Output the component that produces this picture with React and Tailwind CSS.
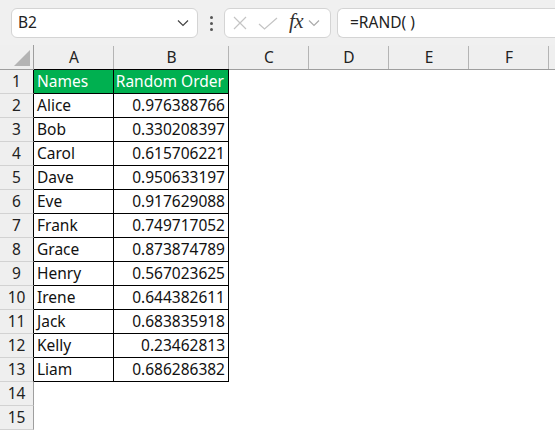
import React from "react";

const rows = [
  ["Alice", "0.976388766"],
  ["Bob", "0.330208397"],
  ["Carol", "0.615706221"],
  ["Dave", "0.950633197"],
  ["Eve", "0.917629088"],
  ["Frank", "0.749717052"],
  ["Grace", "0.873874789"],
  ["Henry", "0.567023625"],
  ["Irene", "0.644382611"],
  ["Jack", "0.683835918"],
  ["Kelly", "0.23462813"],
  ["Liam", "0.686286382"],
];

const cols = ["A", "B", "C", "D", "E", "F"];

const Chevron = ({ className }) => (
  <svg viewBox="0 0 12 8" className={className} fill="none" stroke="currentColor" strokeWidth="1.2">
    <path d="M1 1.5 6 6.5 11 1.5" />
  </svg>
);

const Toolbar = () => (
  <div className="h-[45px] bg-[#f0f0f0] flex items-center pl-[11px] pt-[1px]">
    {/* Name box */}
    <div className="w-[187px] h-[30px] bg-white border border-[#d4d4d4] rounded-[6px] flex items-center justify-between pl-[6px] pr-[8px]">
      <span className="text-[15.5px] text-[#222]">B2</span>
      <Chevron className="w-[12px] h-[8px] text-[#444]" />
    </div>
    <div className="w-[26px] flex flex-col items-center gap-[3px]">
      <span className="w-[3px] h-[3px] bg-[#555] rounded-full" />
      <span className="w-[3px] h-[3px] bg-[#555] rounded-full" />
      <span className="w-[3px] h-[3px] bg-[#555] rounded-full" />
    </div>
    {/* cancel / enter / fx */}
    <div className="w-[107px] h-[30px] bg-white border border-[#d4d4d4] rounded-[6px] flex items-center pl-[8px]">
      <svg viewBox="0 0 14 14" className="w-[14px] h-[14px] text-[#c4c4c4]" fill="none" stroke="currentColor" strokeWidth="1.2">
        <path d="M1 1 13 13M13 1 1 13" />
      </svg>
      <svg viewBox="0 0 20 13" className="w-[20px] h-[13px] ml-[11px] text-[#c4c4c4]" fill="none" stroke="currentColor" strokeWidth="1.2">
        <path d="M1 7 6.5 12 19 1" />
      </svg>
      <span className="ml-[11px] text-[21px] italic text-[#333] leading-none font-['Liberation_Serif',serif] tracking-[-0.5px] -mt-[3px]">fx</span>
      <Chevron className="ml-[5px] w-[12px] h-[8px] text-[#aaa]" />
    </div>
    {/* formula */}
    <div className="ml-[6px] flex-1 h-[30px] bg-white border border-r-0 border-[#d4d4d4] rounded-l-[6px] flex items-center pl-[12px]">
      <span className="text-[15.5px] text-[#222]">=RAND( )</span>
    </div>
  </div>
);

const grid = "grid grid-cols-[34px_80px_115px_80px_80px_80px_80px_1fr]";

export default function App() {
  return (
    <div className="w-[555px] h-[430px] overflow-hidden bg-white font-['Noto_Sans',sans-serif] text-[#111] text-[15.5px]">
      <Toolbar />
      {/* column headers */}
      <div className={`${grid} h-[25px] bg-[#efefef]`}>
        <div className="border-r border-b border-[#9e9e9e] relative">
          <svg viewBox="0 0 16 16" className="absolute right-[3px] bottom-[3px] w-[16px] h-[16px]">
            <path d="M16 0 16 16 0 16Z" fill="#b4b4b4" />
          </svg>
        </div>
        {cols.map((c) => (
          <div
            key={c}
            className={`flex items-center justify-center text-[#222] pt-[1px] border-b ${
              c === "A" || c === "B" ? "border-b-black" : "border-b-[#9e9e9e]"
            } relative`}
          >
            {c}
            <span className="absolute right-0 top-[1px] bottom-0 w-px bg-[#b4b4b4]" />
          </div>
        ))}
        <div className="border-b border-[#9e9e9e]" />
      </div>
      {/* row 1 */}
      <div className={`${grid} h-[24px]`}>
        <div className="bg-[#efefef] border-r border-b border-r-black border-b-[#d2d2d2] flex items-center justify-center text-[#222]">1</div>
        <div className="bg-[#00b050] text-white flex items-center pl-[3px] border-r border-b border-black">Names</div>
        <div className="bg-[#00b050] text-white flex items-center justify-end pr-[4px] border-r border-b border-black">Random Order</div>
      </div>
      {rows.map(([name, val], i) => (
        <div key={name} className={`${grid} h-[24px]`}>
          <div className="bg-[#efefef] border-r border-b border-r-black border-b-[#d2d2d2] flex items-center justify-center text-[#222]">
            {i + 2}
          </div>
          <div className="flex items-center pl-[3px] border-r border-b border-black">{name}</div>
          <div className="flex items-center justify-end pr-[3px] border-r border-b border-black">{val}</div>
        </div>
      ))}
      {[14, 15].map((n) => (
        <div key={n} className={`${grid} h-[24px]`}>
          <div className="bg-[#efefef] border-r border-b border-r-[#9e9e9e] border-b-[#d2d2d2] flex items-center justify-center text-[#222]">
            {n}
          </div>
        </div>
      ))}
    </div>
  );
}
